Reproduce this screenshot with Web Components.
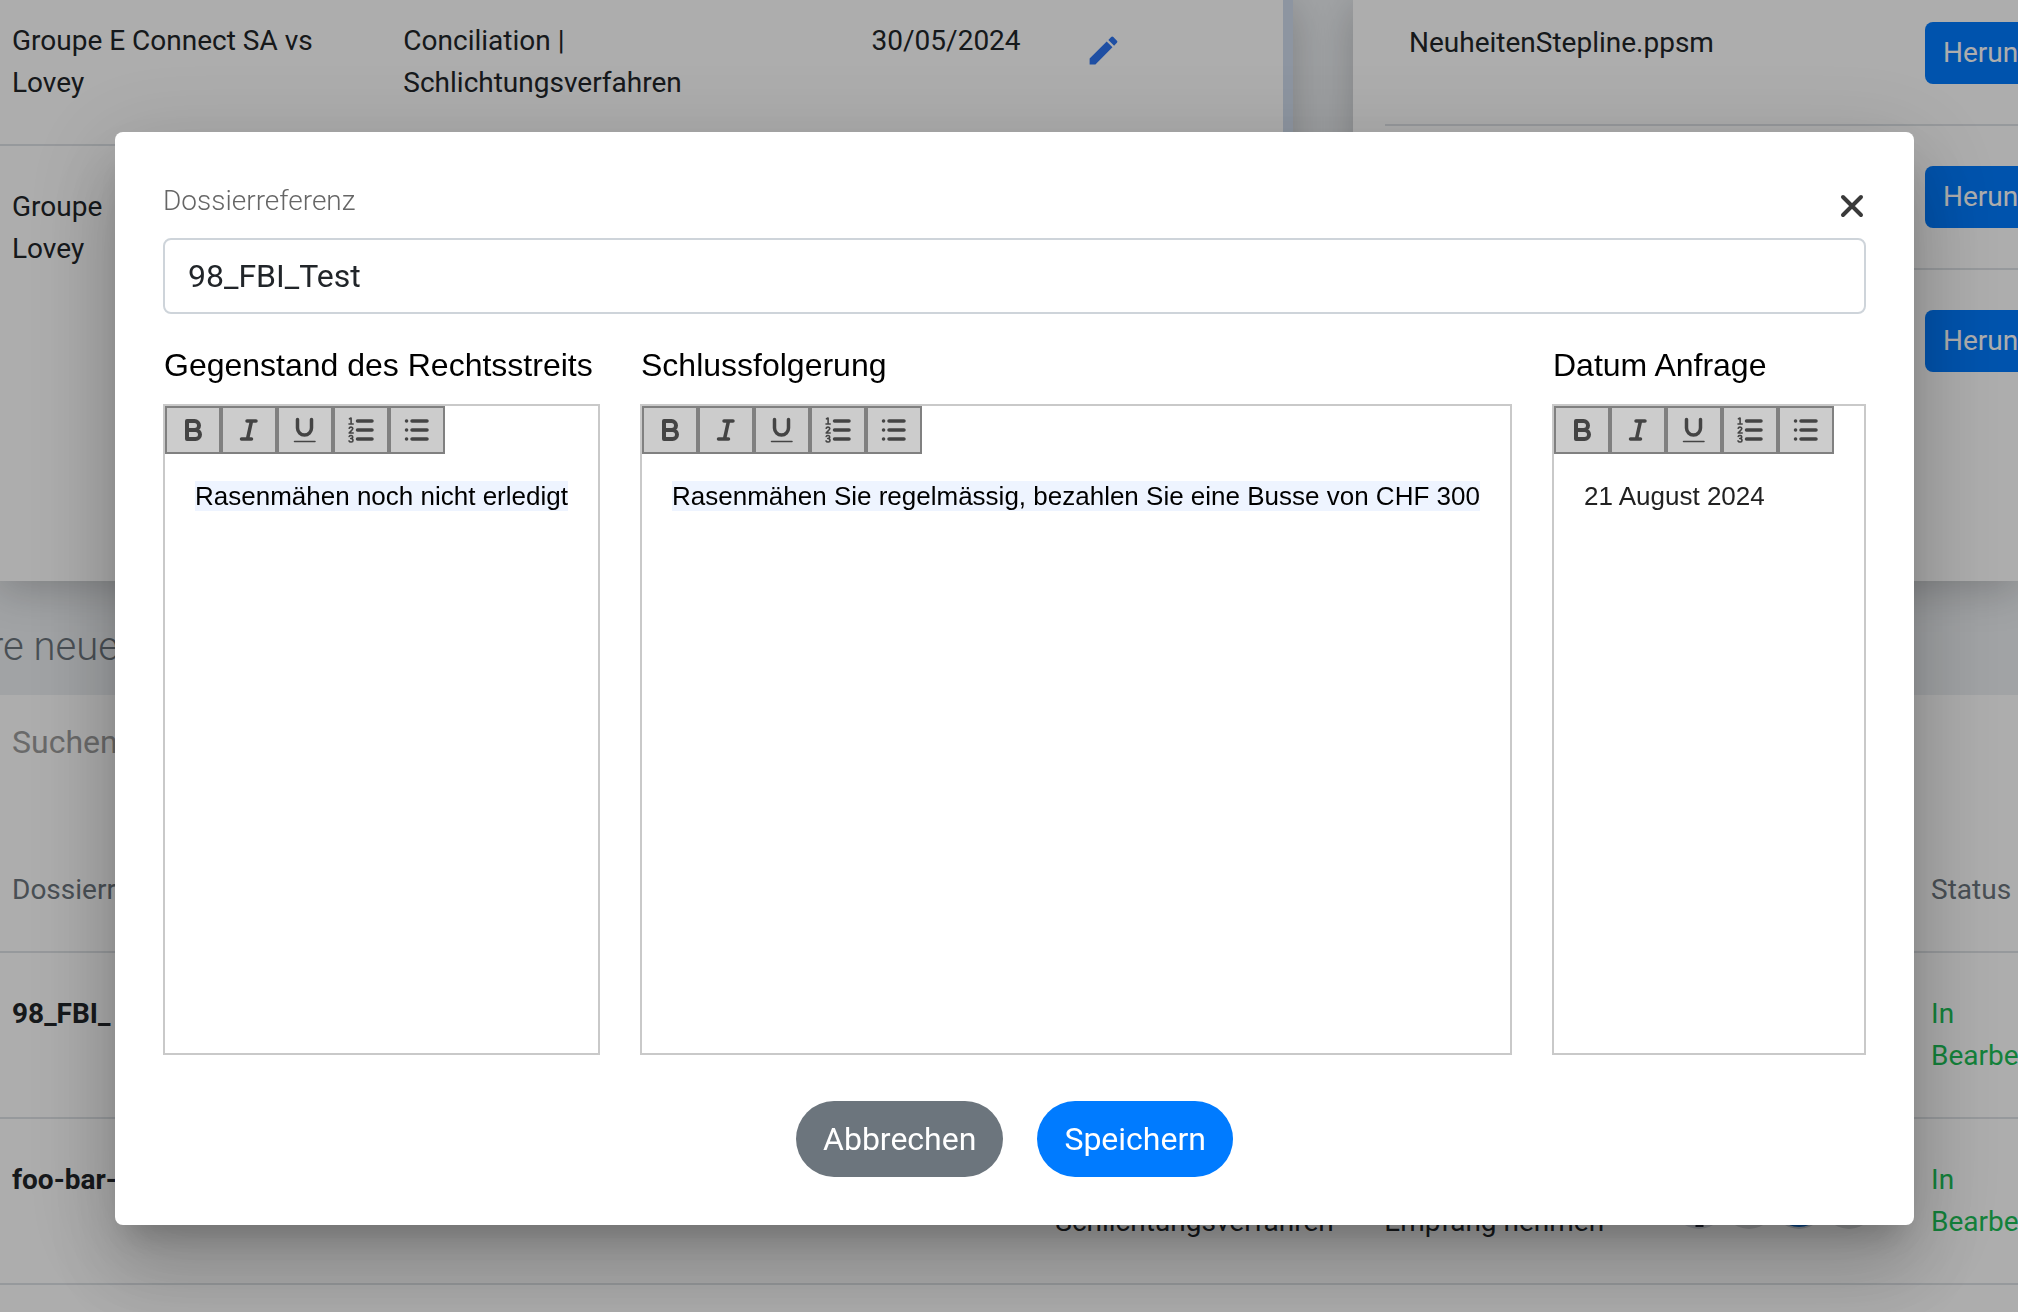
<!DOCTYPE html>
<html lang="de">
<head>
<meta charset="utf-8">
<title>Dossier bearbeiten</title>
<style>
  html, body { margin: 0; height: 100%; overflow: hidden; }
  body { font: 400 28px/42px Roboto, sans-serif; color: #212529; background: #edf0f3; }
</style>
</head>
<body>
<case-dashboard></case-dashboard>
<modal-dialog>
  <text-field label="Dossierreferenz" value="98_FBI_Test">
    <close-button slot="action"></close-button>
  </text-field>
  <rich-editor slot="editors" label="Gegenstand des Rechtsstreits" marked>Rasenmähen noch nicht erledigt</rich-editor>
  <rich-editor slot="editors" label="Schlussfolgerung" marked>Rasenmähen Sie regelmässig, bezahlen Sie eine Busse von CHF 300</rich-editor>
  <rich-editor slot="editors" label="Datum Anfrage">21 August 2024</rich-editor>
  <pill-button slot="actions" tone="secondary">Abbrechen</pill-button>
  <pill-button slot="actions">Speichern</pill-button>
</modal-dialog>

<script>
const define = (name, render, setup) => customElements.define(name, class extends HTMLElement {
  connectedCallback() {
    if (this.shadowRoot) return;
    const root = this.attachShadow({ mode: 'open' });
    root.innerHTML = '<style>*{box-sizing:border-box}button,input{font:inherit;margin:0}</style>' + render(this);
    if (setup) setup(this, root);
  }
});

/* ---------- dialog parts ---------- */

define('close-button', () => `
  <style>
    :host { display: block; }
    button { display: flex; align-items: center; justify-content: center; width: 28px; height: 32px; padding: 0; border: 0; background: none; color: #3a3a3a; }
  </style>
  <button type="button" aria-label="Schliessen">
    <svg width="24" height="24" viewBox="0 0 24 24" fill="none" stroke="currentColor" stroke-width="4" stroke-linecap="round"><path d="M3 3l18 18M21 3L3 21"/></svg>
  </button>`,
  (host, root) => root.querySelector('button').addEventListener('click', () => host.dispatchEvent(new Event('dialog-close', { bubbles: true, composed: true }))));

define('text-field', host => `
  <style>
    :host { display: block; }
    .head { display: flex; justify-content: space-between; align-items: flex-end; margin-bottom: 16px; }
    label { font-weight: 300; color: #666; }
    input { display: block; width: 100%; height: 76px; padding: 0 23px; border: 2px solid #ced4da; border-radius: 8px; background: #fff; color: #212529; font-size: 32px; outline: none; }
  </style>
  <div class="head"><label for="field">${host.getAttribute('label')}</label><slot name="action"></slot></div>
  <input id="field" type="text" value="${host.getAttribute('value')}">`);

const tools = [
  ['Fett', '<path stroke-width="4" d="M8 5h7.500a4.500 4.500 0 0 1 0 9H8zM8 14h8.500a4.500 4.500 0 0 1 0 9H8z"/>'],
  ['Kursiv', '<path stroke-width="3.500" d="M12 5h9M6.500 23h10M16.500 5l-4 18"/>'],
  ['Unterstrichen', '<path stroke-width="3.500" d="M6.500 3.500v8.500a7 7 0 0 0 14 0V3.500"/><path stroke-width="1.500" d="M3.500 25.500h20.500"/>'],
  ['Nummerierte Liste', '<path stroke-width="3.500" d="M10.500 5h14.500M10.500 14h14.500M10.500 23h14.500"/><path stroke-width="1.600" d="M2.500 2.800l1.600-.8v6M2 8h4.200M2.200 12.200c.4-1.600 3.600-1.400 3.600.3 0 1.500-2 2.300-3.600 4.500h4M2.200 20.500c.7-1.500 3.600-1.200 3.500.4 0 1.200-1 1.600-2 1.600 1.200 0 2.300.5 2.300 1.900 0 2-3.200 2.200-4 .5"/>'],
  ['Aufzählung', '<path stroke-width="3.500" d="M9 5h15M9 14h15M9 23h15M3.500 5h.1M3.500 14h.1M3.500 23h.1"/>']
];

define('editor-toolbar', () => `
  <style>
    :host { display: flex; }
    button { display: flex; align-items: center; justify-content: center; width: 56px; height: 48px; padding: 0; border: 2px solid #808080; border-radius: 0; background: #ccc; color: #444; }
  </style>
  ${tools.map(([name, art]) => `<button type="button" aria-label="${name}"><svg width="28" height="28" viewBox="0 0 28 28" fill="none" stroke="currentColor" stroke-linecap="round" stroke-linejoin="round">${art}</svg></button>`).join('')}`);

define('rich-editor', host => `
  <style>
    :host { display: flex; flex-direction: column; min-width: 0; font-family: "Liberation Sans", Arial, sans-serif; }
    .label { padding-left: 1px; margin-bottom: 16px; font-size: 32px; line-height: 46px; color: #000; white-space: nowrap; }
    .box { min-height: 651px; border: 2px solid #c9c9c9; background: #fff; }
    .text { padding: 22px 0 22px 30px; font-size: 26px; line-height: 40px; color: #222; outline: none; }
    :host([marked]) .text { color: #000; }
    :host([marked]) .text span { background: #eef4ff; }
  </style>
  <div class="label" id="caption">${host.getAttribute('label')}</div>
  <div class="box">
    <editor-toolbar></editor-toolbar>
    <div class="text" contenteditable="true" spellcheck="false" role="textbox" aria-multiline="true" aria-labelledby="caption"><span><slot></slot></span></div>
  </div>`);

define('pill-button', host => `
  <style>
    :host { display: block; }
    button { display: block; height: 76px; padding: 0 27px; border: 0; border-radius: 38px; background: #007bff; color: #fff; font-size: 32px; }
    :host([tone="secondary"]) button { background: #6c757d; }
  </style>
  <button type="button"><slot></slot></button>`);

define('modal-dialog', () => `
  <style>
    :host { position: fixed; inset: 0; display: flex; align-items: flex-start; padding: 132px 104px 87px 115px; background: rgba(0,0,0,.32); box-sizing: border-box; }
    :host([hidden]) { display: none; }
    section { flex: 1; min-width: 0; padding: 48px; border-radius: 8px; background: #fff; box-shadow: 0 22px 30px -14px rgba(0,0,0,.2), 0 48px 76px 6px rgba(0,0,0,.14), 0 18px 92px 16px rgba(0,0,0,.12); }
    .editors { display: grid; grid-template-columns: 437fr 872fr 314fr; gap: 40px; margin-top: 28px; }
    .actions { display: flex; justify-content: center; gap: 34px; margin-top: 46px; }
  </style>
  <section role="dialog" aria-modal="true" aria-label="Dossier bearbeiten">
    <slot></slot>
    <div class="editors"><slot name="editors"></slot></div>
    <div class="actions"><slot name="actions"></slot></div>
  </section>`,
  host => host.addEventListener('dialog-close', () => { host.hidden = true; }));

/* ---------- page behind the dialog ---------- */

define('dossier-table', () => `
  <style>
    :host { display: block; background: #fff; border-right: 10px solid #d0dced; box-shadow: 0 8px 40px rgba(0,0,0,.22); }
    table { width: 100%; table-layout: fixed; border-collapse: separate; border-spacing: 0; }
    td { padding: 40px 0 40px 12px; vertical-align: top; white-space: nowrap; }
    tr:first-child td { padding-top: 20px; border-bottom: 2px solid #dee2e6; }
    tr:first-child td.edit { padding: 32px 0 0 7px; }
    button { display: block; padding: 0; border: 0; background: none; color: #2f75f0; }
    svg { display: block; }
  </style>
  <table>
    <colgroup><col style="width:30.5%"><col style="width:36.5%"><col style="width:17%"><col></colgroup>
    <tr>
      <td>Groupe E Connect SA vs<br>Lovey</td>
      <td>Conciliation |<br>Schlichtungsverfahren</td>
      <td>30/05/2024</td>
      <td class="edit"><button type="button" aria-label="Bearbeiten"><svg width="37" height="37" viewBox="0 0 24 24" fill="currentColor"><path d="M3 17.250V21h3.750L17.810 9.940l-3.750-3.750L3 17.250zM20.710 7.040a1 1 0 0 0 0-1.410l-2.340-2.340a1 1 0 0 0-1.410 0l-1.830 1.830 3.750 3.750 1.830-1.830z"/></svg></button></td>
    </tr>
    <tr><td>Groupe<br>Lovey</td><td></td><td></td><td></td></tr>
  </table>`);

define('file-row', host => `
  <style>
    :host { display: grid; grid-template-columns: 516px auto; align-items: start; padding: 40px 0 40px 24px; border-bottom: 2px solid #dee2e6; }
    :host(:first-child) { padding-top: 22px; }
    :host(:last-child) { border-bottom: 0; }
    button { height: 62px; padding: 0 18px; border: 0; border-radius: 8px; background: #007bff; color: #fff; text-align: left; }
  </style>
  <span><slot></slot></span><button type="button">Herunterladen</button>`);

define('file-list', () => `
  <style>
    :host { display: block; min-width: 0; padding-left: 32px; background: #fff; box-shadow: 0 8px 40px rgba(0,0,0,.22); }
  </style>
  <div><file-row>NeuheitenStepline.ppsm</file-row><file-row></file-row><file-row></file-row></div>`);

define('avatar-stack', () => `
  <style>
    :host { display: flex; height: 84px; align-items: center; }
    svg { display: block; flex: none; margin-right: -6px; }
  </style>
  <svg width="56" height="56" viewBox="0 0 56 56"><circle cx="28" cy="28" r="28" fill="#d8dbe4"/><path d="M24.500 14h8v40h-8z" fill="#212533"/></svg>
  <svg width="56" height="56" viewBox="0 0 56 56"><circle cx="28" cy="28" r="28" fill="#dcdddf"/></svg>
  <svg width="56" height="56" viewBox="0 0 56 56"><circle cx="28" cy="28" r="28" fill="#cfd5de"/><circle cx="28" cy="28" r="26" fill="#0b62c0"/></svg>
  <svg width="56" height="56" viewBox="0 0 56 56"><circle cx="28" cy="28" r="28" fill="#dcdddf"/></svg>`);

define('new-dossiers', () => `
  <style>
    :host { display: block; padding-top: 9px; background: #fff; position: relative; }
    input { display: block; width: 100%; height: 76px; margin-bottom: 49px; padding: 0 12px; border: 0; background: none; font-size: 32px; color: #212529; outline: none; }
    input::placeholder { color: #9c9c9c; opacity: 1; }
    table { width: 100%; table-layout: fixed; border-collapse: separate; border-spacing: 0; }
    th, td { padding: 40px 0 40px 12px; border-bottom: 2px solid #dee2e6; text-align: left; vertical-align: top; white-space: nowrap; overflow: hidden; }
    th { font-weight: 400; color: #6c757d; }
    .ref { font-weight: 700; }
    .state { color: #1cbf57; }
  </style>
  <input type="search" placeholder="Suchen" aria-label="Suchen">
  <table>
    <colgroup><col style="width:51.700%"><col style="width:16.300%"><col style="width:14.200%"><col style="width:12.900%"><col></colgroup>
    <thead><tr><th>Dossierreferenz</th><th></th><th></th><th></th><th>Status</th></tr></thead>
    <tbody>
      <tr><td class="ref">98_FBI_</td><td></td><td></td><td></td><td class="state">In<br>Bearbeitung</td></tr>
      <tr><td class="ref">foo-bar-</td><td>Conciliation |<br>Schlichtungsverfahren</td><td><br>Empfang nehmen</td><td><avatar-stack></avatar-stack></td><td class="state">In<br>Bearbeitung</td></tr>
    </tbody>
  </table>`);

define('case-dashboard', () => `
  <style>
    :host { display: flex; flex-direction: column; height: 100vh; overflow: hidden; }
    .top { display: grid; grid-template-columns: 1293fr 665fr; gap: 60px; min-height: 581px; }
    h2 { margin: 0; padding: 36px 0 18px; text-indent: -10px; font-weight: 300; font-size: 40px; line-height: 60px; color: #6c757d; position: relative; white-space: nowrap; }
    new-dossiers { flex: 1; }
  </style>
  <div class="top"><dossier-table></dossier-table><file-list></file-list></div>
  <h2>re neue</h2>
  <new-dossiers></new-dossiers>`);
</script>
</body>
</html>
